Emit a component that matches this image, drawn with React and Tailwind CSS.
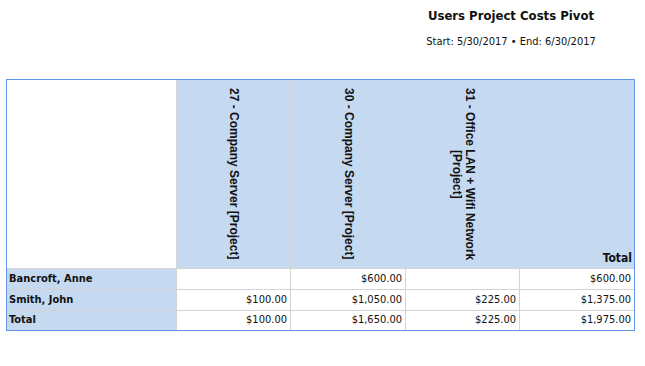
import React from "react";

const columns = [
    ["27 - Company Server [Project]"],
    ["30 - Company Server [Project]"],
    ["31 - Office LAN + Wifi Network", "[Project]"],
];

const rows = [
    { name: "Bancroft, Anne", values: ["", "$600.00", "", "$600.00"], h: "h-[20px]" },
    { name: "Smith, John", values: ["$100.00", "$1,050.00", "$225.00", "$1,375.00"], h: "h-[20px]" },
    { name: "Total", values: ["$100.00", "$1,650.00", "$225.00", "$1,975.00"], h: "h-[19px]" },
];

function App() {
    return (
        <div className="w-[645px] h-[366px] bg-white text-[#111] font-['DejaVu_Sans_Condensed','DejaVu_Sans',sans-serif]">
            <div className="ml-[405px] w-[212px] pt-[7px] text-center">
                <h1 className="text-[13px] font-bold leading-[18px]">Users Project Costs Pivot</h1>
                <p className="text-[11px] leading-[14px] mt-[10px]">Start: 5/30/2017 &bull; End: 6/30/2017</p>
            </div>

            <div className="mt-[30px] ml-[6px] w-[629px] border border-[#6495ed]">
                <div className="grid grid-cols-[169px_113px_114px_113px_114px] gap-px bg-[#d3d3d3]">
                    <div className="h-[188px] bg-white"></div>
                    {columns.map((lines, i) => (
                        <div key={i} className="h-[188px] bg-[#c5d9f0] flex items-center justify-center">
                            <div className="[writing-mode:vertical-rl] text-center text-[12px] font-bold leading-[13px] font-['Liberation_Sans',Arial,sans-serif]">
                                {lines.map((l, j) => <div key={j}>{l}</div>)}
                            </div>
                        </div>
                    ))}
                    <div className="h-[188px] bg-[#c5d9f0] flex items-end justify-end pr-[2px] pb-[1px] text-[12px] font-bold">Total</div>

                    {rows.map((r) => (
                        <React.Fragment key={r.name}>
                            <div className={`${r.h} bg-[#c5d9f0] flex items-center pl-[2px] text-[11px] font-bold`}>{r.name}</div>
                            {r.values.map((v, i) => (
                                <div key={i} className={`${r.h} bg-white flex items-center justify-end pr-[3px] text-[11px]`}>{v}</div>
                            ))}
                        </React.Fragment>
                    ))}
                </div>
            </div>
        </div>
    );
}

export default App;
